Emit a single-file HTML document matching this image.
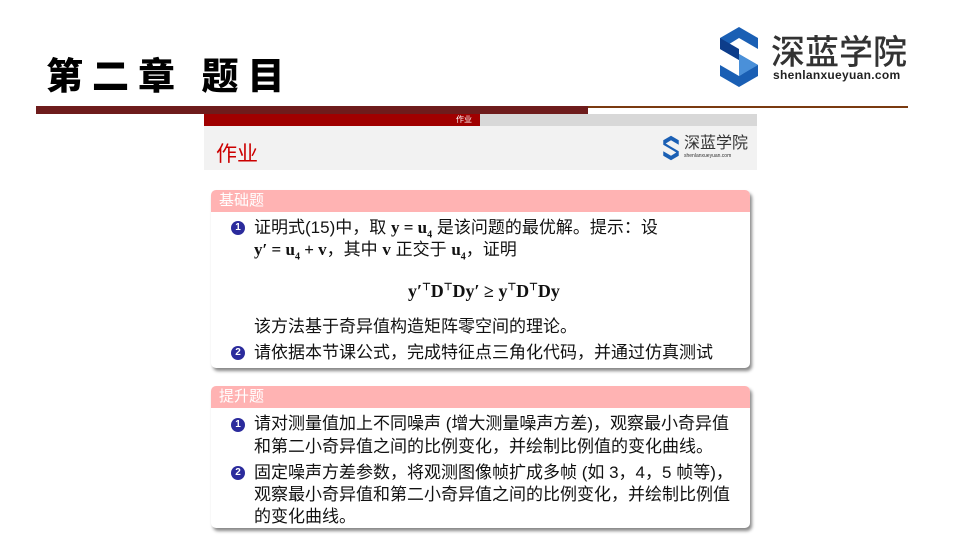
<!DOCTYPE html>
<html><head><meta charset="utf-8"><style>
*{margin:0;padding:0;box-sizing:border-box}
body{width:960px;height:540px;background:#fff;position:relative;overflow:hidden;font-family:"Liberation Sans","Noto Sans CJK SC",sans-serif}
.abs{position:absolute}
.t{font-family:"Noto Sans CJK SC",sans-serif;font-weight:900;font-size:37px;color:#000;left:46px;top:48px;letter-spacing:9px;line-height:50px}
.blk{position:absolute;left:211px;width:539px;background:#fff;border-radius:5px;box-shadow:2px 3px 3px #888}
.hd{height:22px;background:#ffb3b3;color:#fff;font-size:15px;line-height:22px;padding-left:8px;border-radius:5px 5px 0 0}
.ln{position:absolute;left:43px;font-size:17px;color:#111;white-space:nowrap;font-family:"Liberation Sans","Noto Sans CJK SC",sans-serif;line-height:20px}
.b{position:absolute;left:20px;width:14px;height:14px;border-radius:50%;background:#2b2b9c;color:#fff;font-size:10px;line-height:14px;text-align:center;font-weight:bold}
.m{font-family:"Liberation Serif",serif;font-weight:bold}
</style></head><body>
<div class="abs t">第二章&nbsp;题目</div>
<svg class="abs" style="left:712px;top:27px" width="54" height="60" viewBox="0 0 54 60">
<polygon points="27,0 46,11 46,22 27,11 14,19 27,27 46,38 46,49 27,60 8,49 8,38 27,49 40,41 27,33 8,22 8,11" fill="#1a5fb4"/>
<polygon points="27,27 46,38 27,49 27,38" fill="#4a90d9"/>
<polygon points="8,11 27,22 27,33 8,22" fill="#0d3d8a"/>
</svg>
<div class="abs" style="left:771px;top:30px;font-size:34px;color:#333;font-family:'Noto Sans CJK SC',sans-serif;line-height:40px;letter-spacing:0px;font-weight:500">深蓝学院</div>
<div class="abs" style="left:773px;top:68px;font-size:12px;color:#222;font-weight:bold;letter-spacing:0.3px">shenlanxueyuan.com</div>
<div class="abs" style="left:36px;top:106px;width:552px;height:8px;background:#6e1c1c"></div>
<div class="abs" style="left:588px;top:106px;width:320px;height:2px;background:#7a3a10"></div>
<div class="abs" style="left:204px;top:114px;width:276px;height:12px;background:#a00000;color:#fff;font-size:8px;line-height:12px;text-align:right;padding-right:8px">作业</div>
<div class="abs" style="left:480px;top:114px;width:277px;height:12px;background:#d8d8d8"></div>
<div class="abs" style="left:204px;top:126px;width:553px;height:44px;background:#f2f2f2"></div>
<div class="abs" style="left:216px;top:138px;font-size:21px;color:#cc0000">作业</div>
<svg class="abs" style="left:660px;top:135px" width="22" height="26" viewBox="0 0 54 60"><polygon points="27,0 46,11 46,22 27,11 14,19 27,27 46,38 46,49 27,60 8,49 8,38 27,49 40,41 27,33 8,22 8,11" fill="#1a5fb4"/></svg>
<div class="abs" style="left:684px;top:135px;font-size:16px;color:#333;line-height:18px">深蓝学院</div>
<div class="abs" style="left:684px;top:153px;font-size:5px;color:#333">shenlanxueyuan.com</div>

<div class="blk" style="top:190px;height:178px">
<div class="hd">基础题</div>
<div class="b" style="top:31px">1</div>
<div class="ln" style="top:28px">证明式(15)中，取 <span class="m">y = u<sub style="font-size:10px">4</sub></span> 是该问题的最优解。提示：设</div>
<div class="ln" style="top:50px"><span class="m">y′ = u<sub style="font-size:10px">4</sub> + v</span>，其中 <span class="m">v</span> 正交于 <span class="m">u<sub style="font-size:10px">4</sub></span>，证明</div>
<div class="ln m" style="top:88px;left:197px;font-size:18px">y′<sup style="font-size:10px">⊤</sup>D<sup style="font-size:10px">⊤</sup>Dy′ ≥ y<sup style="font-size:10px">⊤</sup>D<sup style="font-size:10px">⊤</sup>Dy</div>
<div class="ln" style="top:127px">该方法基于奇异值构造矩阵零空间的理论。</div>
<div class="b" style="top:156px">2</div>
<div class="ln" style="top:153px">请依据本节课公式，完成特征点三角化代码，并通过仿真测试</div>
</div>

<div class="blk" style="top:386px;height:142px">
<div class="hd">提升题</div>
<div class="b" style="top:32px">1</div>
<div class="ln" style="top:28px">请对测量值加上不同噪声 (增大测量噪声方差)，观察最小奇异值</div>
<div class="ln" style="top:51px">和第二小奇异值之间的比例变化，并绘制比例值的变化曲线。</div>
<div class="b" style="top:80px">2</div>
<div class="ln" style="top:77px">固定噪声方差参数，将观测图像帧扩成多帧 (如 3，4，5 帧等)，</div>
<div class="ln" style="top:99px">观察最小奇异值和第二小奇异值之间的比例变化，并绘制比例值</div>
<div class="ln" style="top:121px">的变化曲线。</div>
</div>
</body></html>
